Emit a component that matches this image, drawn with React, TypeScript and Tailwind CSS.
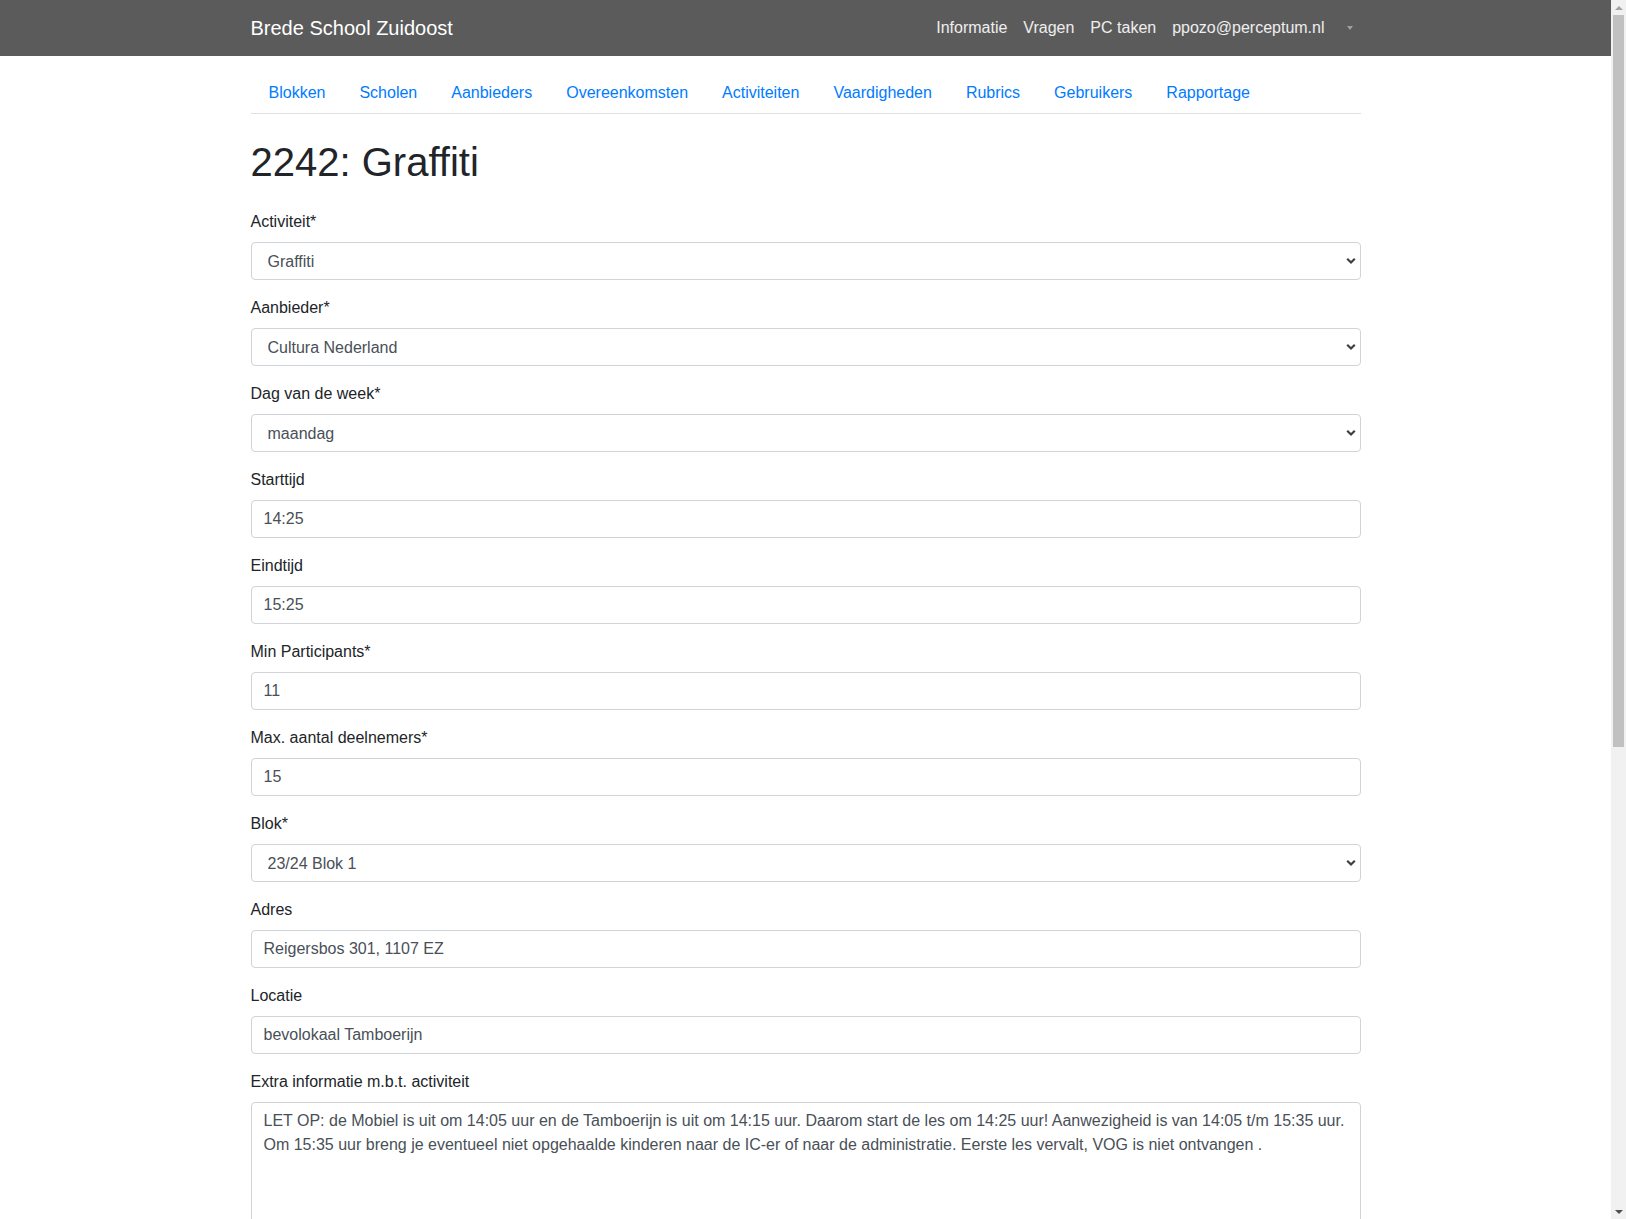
import React from "react";

const TABS = [
  "Blokken",
  "Scholen",
  "Aanbieders",
  "Overeenkomsten",
  "Activiteiten",
  "Vaardigheden",
  "Rubrics",
  "Gebruikers",
  "Rapportage",
];

const EXTRA =
  "LET OP: de Mobiel is uit om 14:05 uur en de Tamboerijn is uit om 14:15 uur. Daarom start de les om 14:25 uur! Aanwezigheid is van 14:05 t/m 15:35 uur. Om 15:35 uur breng je eventueel niet opgehaalde kinderen naar de IC-er of naar de administratie. Eerste les vervalt, VOG is niet ontvangen .";

type Field =
  | { kind: "select"; label: string; value: string; options: string[] }
  | { kind: "input"; label: string; value: string };

const FIELDS: Field[] = [
  { kind: "select", label: "Activiteit*", value: "Graffiti", options: ["Graffiti", "Dans", "Voetbal"] },
  { kind: "select", label: "Aanbieder*", value: "Cultura Nederland", options: ["Cultura Nederland"] },
  {
    kind: "select",
    label: "Dag van de week*",
    value: "maandag",
    options: ["maandag", "dinsdag", "woensdag", "donderdag", "vrijdag"],
  },
  { kind: "input", label: "Starttijd", value: "14:25" },
  { kind: "input", label: "Eindtijd", value: "15:25" },
  { kind: "input", label: "Min Participants*", value: "11" },
  { kind: "input", label: "Max. aantal deelnemers*", value: "15" },
  { kind: "select", label: "Blok*", value: "23/24 Blok 1", options: ["23/24 Blok 1", "23/24 Blok 2"] },
  { kind: "input", label: "Adres", value: "Reigersbos 301, 1107 EZ" },
  { kind: "input", label: "Locatie", value: "bevolokaal Tamboerijn" },
];

function Chevron() {
  return (
    <svg
      width="10"
      height="7"
      viewBox="0 0 10 7"
      className="pointer-events-none absolute right-[5px] top-1/2 -translate-y-1/2"
    >
      <path d="M1.2 1.2 L5 5 L8.8 1.2" fill="none" stroke="#3c4043" strokeWidth="2.2" />
    </svg>
  );
}

function FormField({ field }: { field: Field }) {
  return (
    <div className="mb-4">
      <label className="mb-2 inline-block leading-6">{field.label}</label>
      {field.kind === "select" ? (
        <div className="relative">
          <select
            defaultValue={field.value}
            className="block h-[38px] w-full appearance-none rounded border border-[#ced4da] bg-white pb-px pl-4 pr-8 pt-[2px] text-base text-[#495057] outline-none"
          >
            {field.options.map((o) => (
              <option key={o}>{o}</option>
            ))}
          </select>
          <Chevron />
        </div>
      ) : (
        <input
          defaultValue={field.value}
          className="block h-[38px] w-full rounded border border-[#ced4da] bg-white px-3 text-base text-[#495057] outline-none"
        />
      )}
    </div>
  );
}

// the reference shows the browser's own scrollbar; drawn here so the layout keeps its 15px
function Scrollbar() {
  return (
    <div className="fixed inset-y-0 right-0 flex w-[15px] flex-col bg-[#f1f1f1]">
      <div className="flex h-[15px] items-center justify-center">
        <span className="h-0 w-0 border-x-[4px] border-b-[4px] border-x-transparent border-b-[#a3a3a3]" />
      </div>
      <div className="mx-[2px] h-[732px] bg-[#c1c1c1]" />
      <div className="flex-1" />
      <div className="flex h-[15px] items-center justify-center">
        <span className="h-0 w-0 border-x-[4px] border-t-[4px] border-x-transparent border-t-[#505050]" />
      </div>
    </div>
  );
}

export default function App() {
  return (
    <div className="min-h-[1980px] bg-white font-['Liberation_Sans',Arial,sans-serif] text-base text-[#212529]">
      <div className="mr-[15px]">
        <nav className="bg-[#5b5b5b]">
          <div className="mx-auto flex h-14 w-[1110px] items-center justify-between">
            <span className="text-xl leading-[30px] text-white">Brede School Zuidoost</span>
            <ul className="flex items-center text-white/90">
              <li className="px-2 leading-6">Informatie</li>
              <li className="px-2 leading-6">Vragen</li>
              <li className="px-2 leading-6">PC taken</li>
              <li className="px-2 leading-6">ppozo@perceptum.nl</li>
              <li className="flex items-center py-2 pl-[14px] pr-2">
                <span className="h-0 w-0 border-x-[3.5px] border-t-[4px] border-x-transparent border-t-[#a0a0a0]" />
              </li>
            </ul>
          </div>
        </nav>

        <main className="mx-auto w-[1110px]">
          <ul className="mt-4 flex border-b border-[#dee2e6] pl-px">
            {TABS.map((t) => (
              <li key={t} className="-mb-px">
                <a
                  href="#"
                  className="block rounded-t border border-transparent px-4 py-2 leading-6 text-[#007bff]"
                >
                  {t}
                </a>
              </li>
            ))}
          </ul>

          <h1 className="my-6 text-[40px] font-medium leading-[48px]">2242: Graffiti</h1>

          <form>
            {FIELDS.map((f) => (
              <FormField key={f.label} field={f} />
            ))}

            <div className="mb-4">
              <label className="mb-2 inline-block leading-6">Extra informatie m.b.t. activiteit</label>
              <textarea
                rows={10}
                defaultValue={EXTRA}
                className="block w-full resize-y rounded border border-[#ced4da] bg-white px-3 py-[6px] text-base leading-6 text-[#495057] outline-none"
              />
            </div>
          </form>
        </main>
      </div>
      <Scrollbar />
    </div>
  );
}
